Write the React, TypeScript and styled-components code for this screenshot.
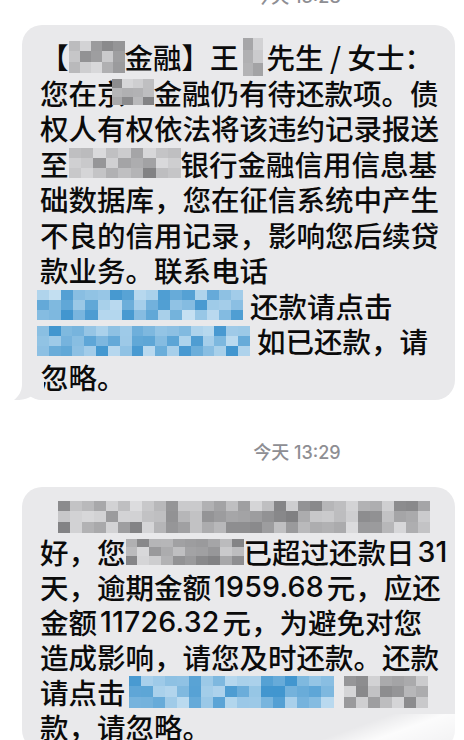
import React from 'react'
import styled, { createGlobalStyle } from 'styled-components'

const GlobalStyle = createGlobalStyle`
    html, body {
        margin: 0;
        padding: 0;
        background: #ffffff;
    }
`

type Tone = 'gray' | 'blue'

type MosaicProps = {
    w: number;
    h?: number;
    tone: Tone;
    seed: number;
    before?: number;
    after?: number;
    lift?: number;
};

// deterministic pseudo random so the pixelation looks the same every render
function shades(count: number, seed: number, tone: Tone) {
    let s = seed
    const out: string[] = []
    for (let i = 0; i < count; i++) {
        s = (s * 9301 + 49297) % 233280
        const r = s / 233280
        if (tone === 'gray') {
            const v = Math.round(128 + r * 92)
            out.push(`rgb(${v}, ${v}, ${v + 2})`)
        } else {
            const red = Math.round(62 + r * 135)
            const green = Math.round(148 + r * 76)
            const blue = Math.round(206 + r * 36)
            out.push(`rgb(${red}, ${green}, ${blue})`)
        }
    }
    return out
}

function Mosaic({ w, h = 32, tone, seed, before = 0, after = 0, lift = 0 }: MosaicProps) {
    const cols = Math.max(1, Math.round(w / 12))
    const rows = 3
    const cells = shades(cols * rows, seed, tone)
    return (
        <Pixels $w={w} $h={h} $cols={cols} $rows={rows} $before={before} $after={after} $lift={lift}>
            {cells.map((c, i) => (
                <Cell key={i} style={{ background: c }} />
            ))}
        </Pixels>
    )
}

function Tail() {
    return (
        <TailMark width="30" height="22" viewBox="0 0 30 22">
            <path d="M8 0 L8 6 C8 13 5 18 0 22 C7 22.5 13 21 18 18 C21 20 25 22 30 22 L30 0 Z" fill="#e9e9eb" />
        </TailMark>
    )
}

function App() {
    return (
        <>
            <GlobalStyle />
            <Screen>
                <Stamp $cut>今天 13:28</Stamp>
                <Bubble $lh={35.5} $top={14}>
                    <Line $lh={35.5}>【<Mosaic w={56} tone="gray" seed={11} />金融】王<Mosaic w={20} h={38} tone="gray" seed={5} before={4} after={4} />先生 / 女士：</Line>
                    <Line $lh={35.5}>您在京<Mosaic w={42} h={26} tone="gray" seed={23} before={-14} />金融仍有待还款项。债</Line>
                    <Line $lh={35.5}>权人有权依法将该违约记录报送</Line>
                    <Line $lh={35.5}>至<Mosaic w={112} h={30} tone="gray" seed={37} />银行金融信用信息基</Line>
                    <Line $lh={35.5}>础数据库，您在征信系统中产生</Line>
                    <Line $lh={35.5}>不良的信用记录，影响您后续贷</Line>
                    <Line $lh={35.5}>款业务。联系电话</Line>
                    <Line $lh={35.5}><Mosaic w={206} h={30} tone="blue" seed={41} before={-3} after={7} />还款请点击</Line>
                    <Line $lh={35.5}><Mosaic w={213} h={30} tone="blue" seed={59} before={-3} after={7} />如已还款，请</Line>
                    <Line $lh={35.5}>忽略。</Line>
                    <Tail />
                </Bubble>

                <Stamp>今天 13:29</Stamp>
                <Bubble $lh={35} $top={12}>
                    <Line $lh={35}><Mosaic w={372} h={32} tone="gray" seed={73} before={18} /></Line>
                    <Line $lh={35}>好，您<Mosaic w={118} h={26} tone="gray" seed={83} />已超过还款日<Num>31</Num></Line>
                    <Line $lh={35}>天，逾期金额<Num>1959.68</Num>元，应还</Line>
                    <Line $lh={35}>金额<Num>11726.32</Num>元，为避免对您</Line>
                    <Line $lh={35}>造成影响，请您及时还款。还款</Line>
                    <Line $lh={35}>请点击<Mosaic w={205} h={32} tone="blue" seed={97} before={3} after={10} /><Mosaic w={84} h={32} tone="gray" seed={101} /></Line>
                    <Line $lh={35}>款，请忽略。</Line>
                </Bubble>
                <Glare />
            </Screen>
        </>
    )
}

export default App

const Screen = styled.div`
    position: relative;
    width: 464px;
    height: 740px;
    overflow: hidden;
    background: #ffffff;
    font-family: "Noto Sans CJK SC", "Noto Sans", sans-serif;
    color: #0b0b0b;
`

const Stamp = styled.div<{ $cut?: boolean }>`
    margin-top: ${p => (p.$cut ? '-14px' : '42px')};
    margin-bottom: ${p => (p.$cut ? '17px' : '23px')};
    padding-left: 130px;
    height: 22px;
    line-height: 22px;
    text-align: center;
    font-family: Inter, "Noto Sans CJK SC", sans-serif;
    font-size: 18px;
    font-weight: 500;
    color: #8e8e93;
`

const Bubble = styled.div<{ $lh: number; $top: number }>`
    position: relative;
    margin-left: 22px;
    width: 433px;
    box-sizing: border-box;
    padding: ${p => p.$top}px 12px 6px 18px;
    border-radius: 20px;
    background: #e9e9eb;
    font-size: 28.5px;
    font-weight: 500;
    line-height: ${p => p.$lh}px;
`

const Line = styled.div<{ $lh: number }>`
    display: flex;
    align-items: center;
    height: ${p => p.$lh}px;
    white-space: pre;
`

const Num = styled.span`
    font-family: Inter, "Noto Sans CJK SC", sans-serif;
    margin: 0 3px;
    letter-spacing: 0.2px;
`

const Pixels = styled.span<{ $w: number; $h: number; $cols: number; $rows: number; $before: number; $after: number; $lift: number }>`
    display: grid;
    flex: none;
    grid-template-columns: repeat(${p => p.$cols}, 1fr);
    grid-template-rows: repeat(${p => p.$rows}, 1fr);
    width: ${p => p.$w}px;
    height: ${p => p.$h}px;
    margin-left: ${p => p.$before}px;
    margin-right: ${p => p.$after}px;
    margin-top: ${p => -p.$lift}px;
    filter: blur(0.7px);
`

const Cell = styled.span`
    display: block;
`

const TailMark = styled.svg`
    position: absolute;
    left: -8px;
    bottom: 0;
`

const Glare = styled.div`
    position: absolute;
    right: 0;
    bottom: 0;
    width: 150px;
    height: 26px;
    background: linear-gradient(160deg, rgba(255, 255, 255, 0) 35%, rgba(255, 255, 255, 0.85) 60%, rgba(255, 255, 255, 0.4) 100%);
    pointer-events: none;
`
